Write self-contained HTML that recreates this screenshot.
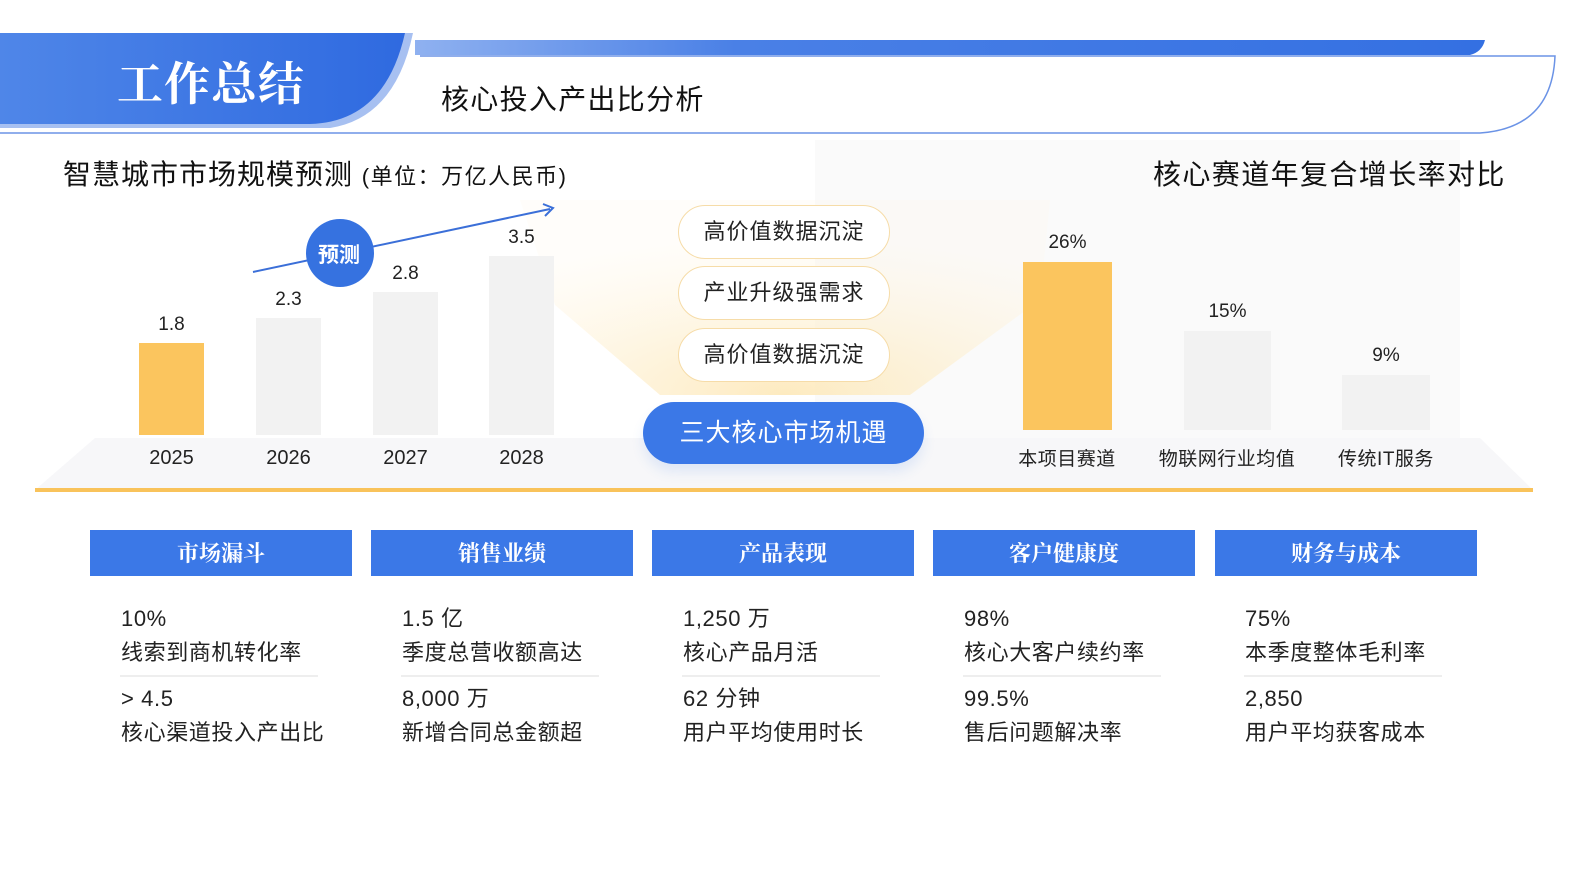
<!DOCTYPE html>
<html><head><meta charset="utf-8"><style>
body{margin:0;width:1569px;height:882px;position:relative;overflow:hidden;background:#fff;font-family:"Liberation Sans","Noto Sans CJK SC",sans-serif;color:#222}
.a{position:absolute}
.t{position:absolute;white-space:nowrap}
.bar{position:absolute;background:#f2f2f2}
.pill{position:absolute;left:678px;width:210px;height:52px;border:1.5px solid #f6dca8;border-radius:27px;background:#fff;text-align:center;line-height:52px;font-size:22px;letter-spacing:1px;color:#222}
.hd{position:absolute;top:530px;width:262px;height:46px;background:#3b78e7;color:#fff;text-align:center;line-height:48px;font-size:22px;font-weight:bold;font-family:"Liberation Serif","Noto Serif CJK SC",serif}
.c{position:absolute;font-size:22px;letter-spacing:0.6px;color:#222;line-height:34px}
.ln{position:absolute;height:2px;background:#eee;width:198px}
</style></head><body>
<svg class="a" style="left:0;top:0" width="1569" height="500">
<defs>
<linearGradient id="g1" x1="0" x2="1"><stop offset="0" stop-color="#4f86e8"/><stop offset="1" stop-color="#2f6ae0"/></linearGradient>
<linearGradient id="g2" x1="0" x2="1"><stop offset="0" stop-color="#8fb1f0"/><stop offset="0.3" stop-color="#4a80e6"/><stop offset="1" stop-color="#3470e2"/></linearGradient>
<radialGradient id="gl" cx="0.5" cy="1" r="0.8"><stop offset="0" stop-color="#fde8b8" stop-opacity="0.9"/><stop offset="1" stop-color="#fff6e4" stop-opacity="0.2"/></radialGradient>
</defs>
<rect x="815" y="140" width="645" height="300" fill="#fafafa"/>
<polygon points="520,200 1050,200 1040,300 910,395 660,395 555,305" fill="url(#gl)"/>
<polygon points="95,438 1480,438 1533,490 35,490" fill="#f7f7f9"/>
<rect x="35" y="488" width="1498" height="4" fill="#f9c35b"/>
<path d="M415 40 H1485 Q1482 52 1470 55 H415 Z" fill="url(#g2)"/>
<path d="M420 56 H1555 Q1552 128 1480 133 H0" fill="none" stroke="#6b93e6" stroke-width="1.5"/>
<path d="M0 33 H413 Q395 118 330 128 H0 Z" fill="#a7c0f1"/>
<path d="M0 33 H405 Q385 122 310 124 H0 Z" fill="url(#g1)"/>
<line x1="253" y1="272" x2="550" y2="209" stroke="#3b6fd8" stroke-width="2"/>
<path d="M543 204 L553 208 L545 216" fill="none" stroke="#3b6fd8" stroke-width="2"/>
<circle cx="340" cy="253" r="34" fill="#3672e0"/>
</svg>
<div class="t" style="left:117px;top:48px;font-size:46px;letter-spacing:1px;font-weight:bold;color:#fff;font-family:'Liberation Serif','Noto Serif CJK SC',serif">工作总结</div>
<div class="t" style="left:441px;top:78px;font-size:28px;letter-spacing:1.3px;color:#111">核心投入产出比分析</div>
<div class="t" style="left:63px;top:153px;font-size:28px;letter-spacing:1px;color:#111">智慧城市市场规模预测 <span style="font-size:22px;letter-spacing:1.5px">(单位：万亿人民币)</span></div>
<div class="t" style="left:1153px;top:153px;font-size:28px;letter-spacing:1.4px;color:#111">核心赛道年复合增长率对比</div>
<div class="t" style="left:318px;top:239px;font-size:21px;color:#fff;font-weight:bold">预测</div>

<div class="bar" style="left:139px;top:343px;width:65px;height:92px;background:#fbc55e"></div>
<div class="bar" style="left:256px;top:318px;width:65px;height:117px"></div>
<div class="bar" style="left:373px;top:292px;width:65px;height:143px"></div>
<div class="bar" style="left:489px;top:256px;width:65px;height:179px"></div>
<div class="t" style="left:139px;width:65px;text-align:center;top:314px;font-size:19px">1.8</div>
<div class="t" style="left:256px;width:65px;text-align:center;top:289px;font-size:19px">2.3</div>
<div class="t" style="left:373px;width:65px;text-align:center;top:263px;font-size:19px">2.8</div>
<div class="t" style="left:489px;width:65px;text-align:center;top:227px;font-size:19px">3.5</div>
<div class="t" style="left:139px;width:65px;text-align:center;top:447px;font-size:20px">2025</div>
<div class="t" style="left:256px;width:65px;text-align:center;top:447px;font-size:20px">2026</div>
<div class="t" style="left:373px;width:65px;text-align:center;top:447px;font-size:20px">2027</div>
<div class="t" style="left:489px;width:65px;text-align:center;top:447px;font-size:20px">2028</div>

<div class="pill" style="top:205px">高价值数据沉淀</div>
<div class="pill" style="top:266px">产业升级强需求</div>
<div class="pill" style="top:328px">高价值数据沉淀</div>
<div class="a" style="left:643px;top:402px;width:281px;height:62px;border-radius:31px;background:#3b78e7;color:#fff;text-align:center;line-height:62px;font-size:25px;letter-spacing:1px;box-shadow:0 8px 12px rgba(59,120,231,0.12)">三大核心市场机遇</div>

<div class="bar" style="left:1023px;top:262px;width:89px;height:168px;background:#fbc55e"></div>
<div class="bar" style="left:1184px;top:331px;width:87px;height:99px"></div>
<div class="bar" style="left:1342px;top:375px;width:88px;height:55px"></div>
<div class="t" style="left:1023px;width:89px;text-align:center;top:232px;font-size:19px">26%</div>
<div class="t" style="left:1184px;width:87px;text-align:center;top:301px;font-size:19px">15%</div>
<div class="t" style="left:1342px;width:88px;text-align:center;top:345px;font-size:19px">9%</div>
<div class="t" style="left:987px;width:160px;text-align:center;top:444px;font-size:19px;letter-spacing:0.5px">本项目赛道</div>
<div class="t" style="left:1147px;width:160px;text-align:center;top:444px;font-size:19px;letter-spacing:0.5px">物联网行业均值</div>
<div class="t" style="left:1306px;width:160px;text-align:center;top:444px;font-size:19px;letter-spacing:0.5px">传统IT服务</div>

<div class="hd" style="left:90px">市场漏斗</div>
<div class="hd" style="left:371px">销售业绩</div>
<div class="hd" style="left:652px">产品表现</div>
<div class="hd" style="left:933px">客户健康度</div>
<div class="hd" style="left:1215px">财务与成本</div>

<div class="c" style="left:121px;top:602px">10%<br>线索到商机转化率</div>
<div class="ln" style="left:120px;top:675px"></div>
<div class="c" style="left:121px;top:682px">&gt; 4.5<br>核心渠道投入产出比</div>
<div class="c" style="left:402px;top:602px">1.5 亿<br>季度总营收额高达</div>
<div class="ln" style="left:401px;top:675px"></div>
<div class="c" style="left:402px;top:682px">8,000 万<br>新增合同总金额超</div>
<div class="c" style="left:683px;top:602px">1,250 万<br>核心产品月活</div>
<div class="ln" style="left:682px;top:675px"></div>
<div class="c" style="left:683px;top:682px">62 分钟<br>用户平均使用时长</div>
<div class="c" style="left:964px;top:602px">98%<br>核心大客户续约率</div>
<div class="ln" style="left:963px;top:675px"></div>
<div class="c" style="left:964px;top:682px">99.5%<br>售后问题解决率</div>
<div class="c" style="left:1245px;top:602px">75%<br>本季度整体毛利率</div>
<div class="ln" style="left:1244px;top:675px"></div>
<div class="c" style="left:1245px;top:682px">2,850<br>用户平均获客成本</div>
</body></html>
